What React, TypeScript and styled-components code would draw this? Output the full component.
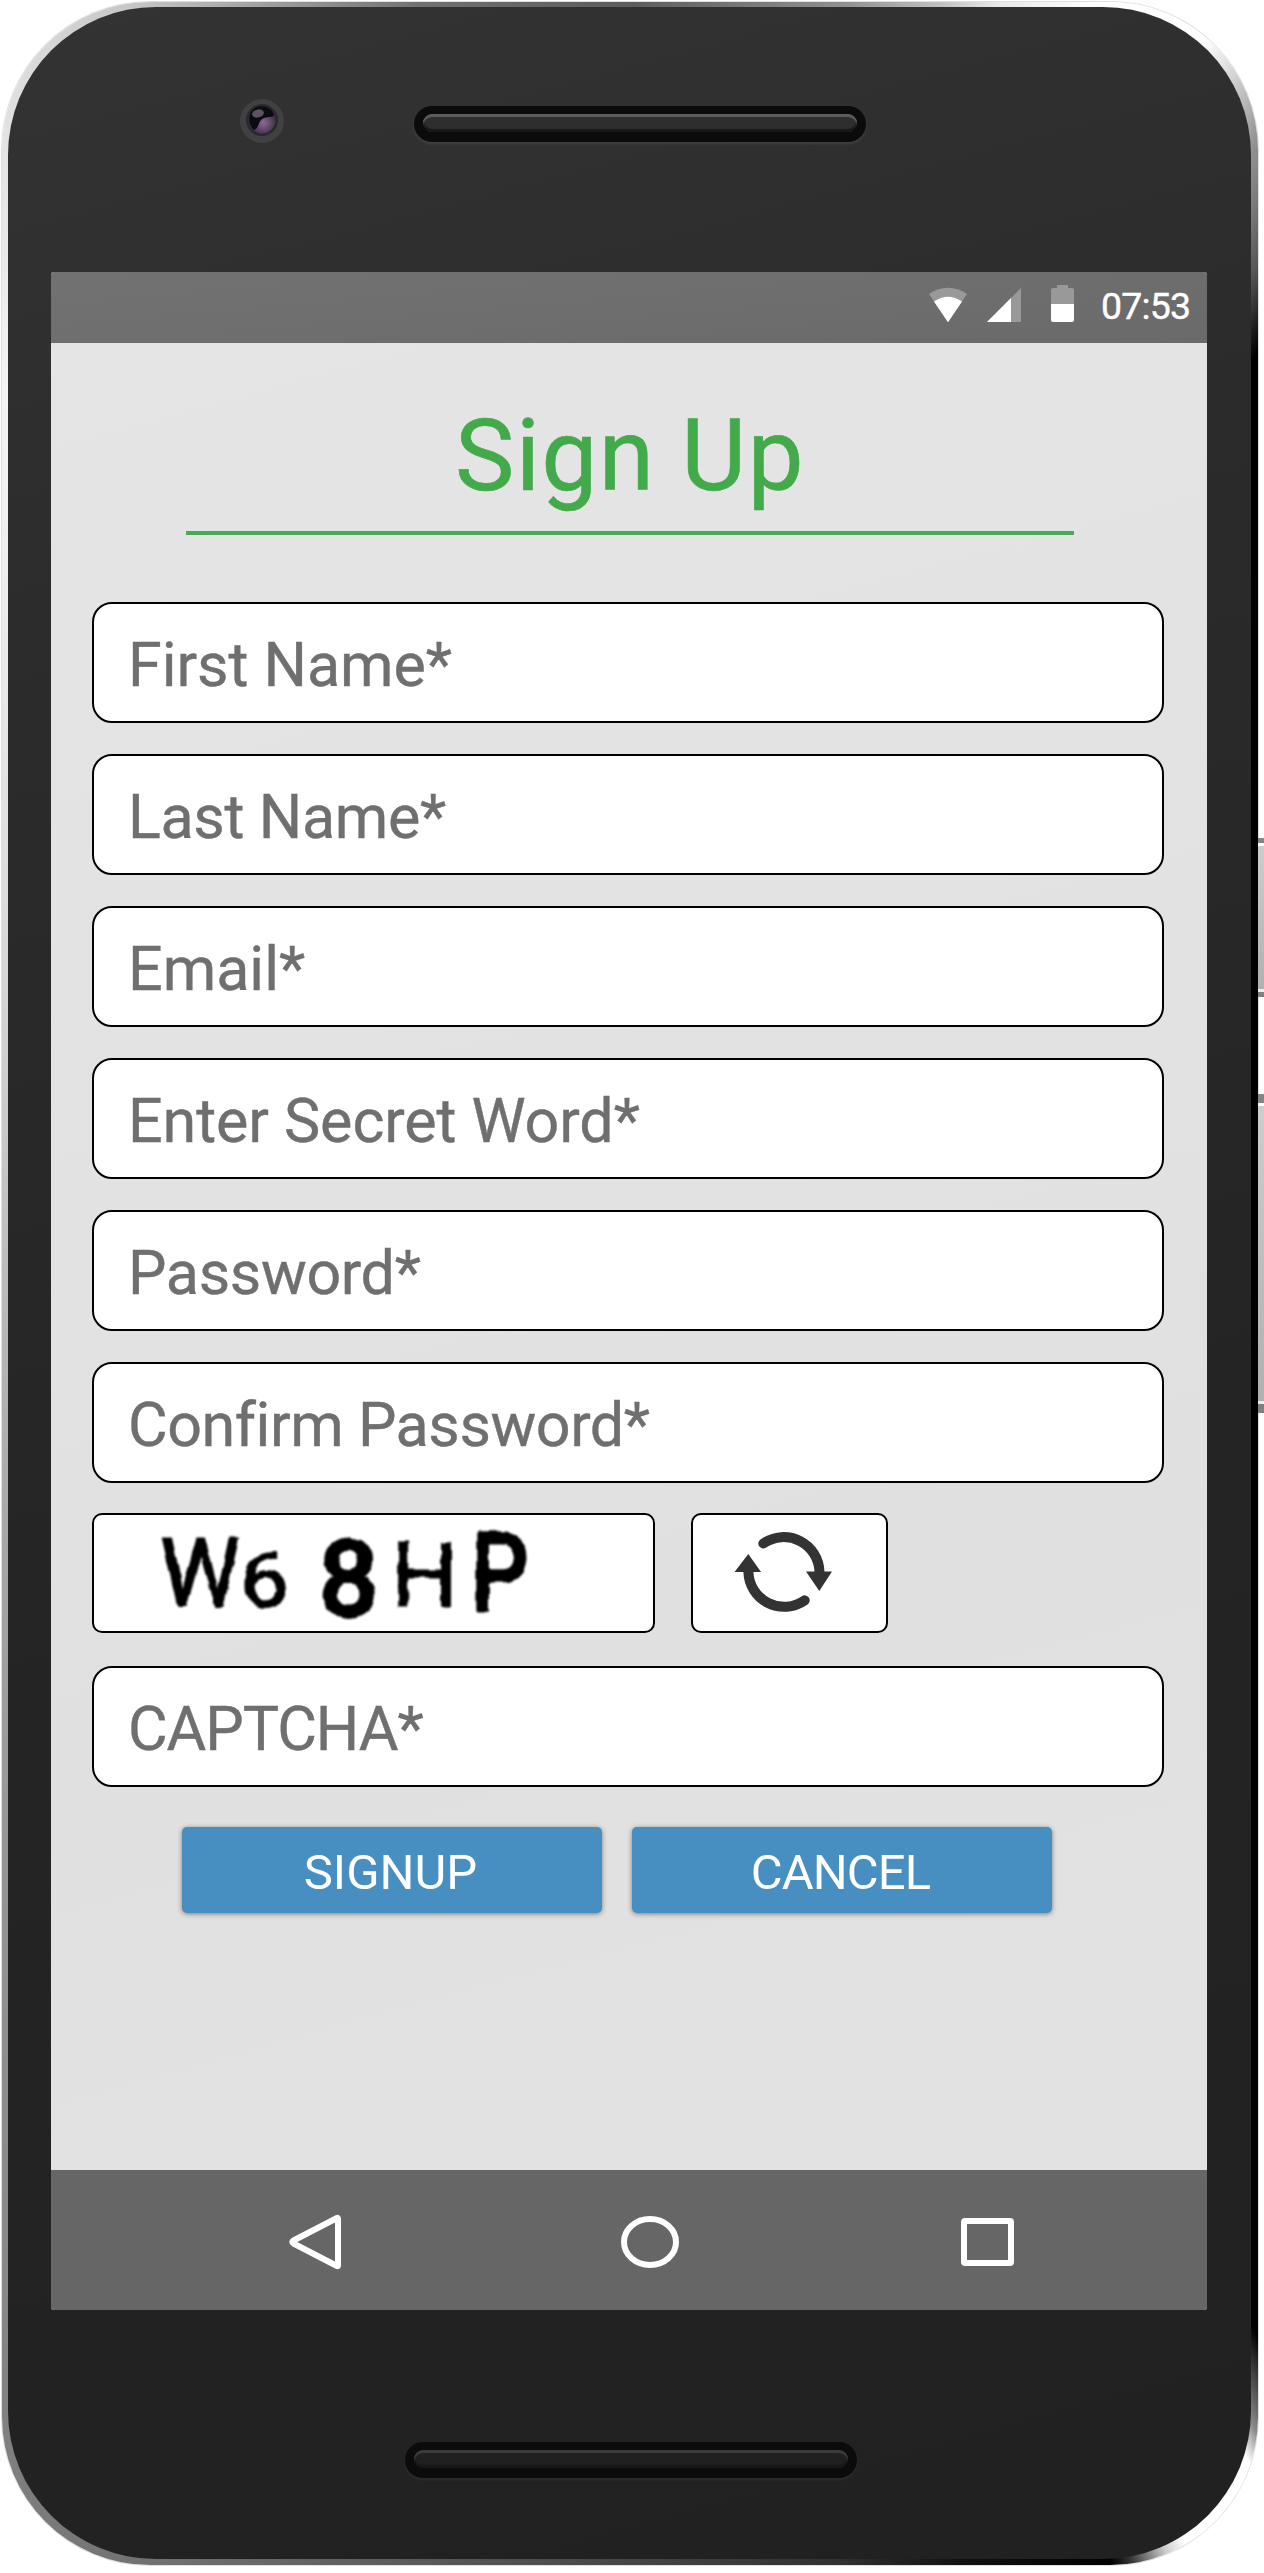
import React, { useState } from "react";
import styled, { createGlobalStyle } from "styled-components";

const GlobalStyle = createGlobalStyle`
  *, *::before, *::after { box-sizing: border-box; }
  html, body { margin: 0; padding: 0; background: #fff; }
  body { font-family: Roboto, "Liberation Sans", sans-serif; overflow: hidden; }
`;

const Stage = styled.main`
  position: relative;
  width: 1264px;
  height: 2573px;
  padding: 2px 0 0 2px;
  overflow: hidden;
`;

const Rim = styled.div`
  width: 1256px;
  height: 2563px;
  padding: 5px 7px 6px 6px;
  border-radius: 148px;
  box-shadow: 0 0 0 1px rgba(0, 0, 0, 0.12);
  background: conic-gradient(
    from 0deg at 628px 1281px,
    #5c5c5c 0deg, #909090 9.5deg, #c0c0c0 13.6deg, #e8e8e8 16deg, #fff 20deg, #fff 24.8deg,
    #ddd 26.2deg, #b0b0b0 27.8deg, #909090 28.8deg, #7c7c7c 30deg, #555 31.7deg, #111 33.5deg,
    #000 34deg, #000 149.2deg, #444 150.3deg, #888 151.4deg, #fff 152.3deg, #fff 156.2deg,
    #ccc 157.1deg, #333 158.6deg, #000 159.4deg, #111 165.5deg, #303030 170.5deg,
    #5a5a5a 189.3deg, #727272 201deg, #828282 209.2deg, #888 212deg, #bbb 270deg,
    #f4f4f4 325deg, #e4e4e4 331.1deg, #d8d8d8 334.6deg, #c4c4c4 339deg, #707070 350.7deg,
    #5c5c5c 360deg
  );
`;

const Body = styled.div`
  display: flex;
  flex-direction: column;
  height: 100%;
  border-radius: 148px;
  background: linear-gradient(165deg, #333 0%, #2b2b2b 25%, #242424 60%, #212121 100%);
  overflow: hidden;
`;

const Forehead = styled.header`
  display: flex;
  align-items: flex-start;
  height: 265px;
  padding: 91px 0 0 232px;
`;

const Camera = styled.svg`
  display: block;
  width: 44px;
  height: 46px;
`;

const Chin = styled.footer`
  display: flex;
  align-items: flex-start;
  padding: 132px 0 0 397px;
`;

const Grille = styled.div<{ $dim?: boolean }>`
  width: 452px;
  height: 36px;
  padding: 8px 9px 10px;
  border-radius: 18px;
  background: #0b0b0b;
  box-shadow: 0 2px 3px ${(p) => (p.$dim ? "rgba(255,255,255,.06)" : "rgba(255,255,255,.09)")};
`;

const TopGrille = styled(Grille)`
  margin: 8px 0 0 130px;
`;

const GrilleBar = styled.div<{ $dim?: boolean }>`
  height: 18px;
  border-radius: 9px;
  background: ${(p) => (p.$dim ? "#202020" : "#2e2e2e")};
  box-shadow: inset 0 3px 1px ${(p) => (p.$dim ? "#3c3c3c" : "#5f5c5f")}, inset 0 -3px 1px #181818;
`;

const Screen = styled.section`
  display: flex;
  flex-direction: column;
  width: 1156px;
  height: 2038px;
  margin-left: 43px;
  border-radius: 3px;
  overflow: hidden;
  background: linear-gradient(165deg, #e5e5e5 0%, #e2e2e2 45%, #e0e0e0 66%, #e2e2e2 82%, #e2e2e2 100%);
`;

const StatusBar = styled.div`
  display: flex;
  justify-content: flex-end;
  align-items: flex-start;
  height: 71px;
  padding-right: 15px;
  background: linear-gradient(175deg, #727272, #6a6a6a);
`;

const StatusIcons = styled.svg`
  display: block;
  width: 150px;
  height: 71px;
`;

const Clock = styled.time`
  margin-left: 23px;
  width: 91px;
  color: #fff;
  font-size: 37.5px;
  line-height: 69px;
  letter-spacing: -0.8px;
  white-space: nowrap;
  -webkit-text-stroke: 0.4px #fff;
`;

const Form = styled.form`
  display: flex;
  flex-direction: column;
  flex: 1;
  padding: 0 43px 0 41px;
`;

const Title = styled.h1`
  width: 888px;
  height: 192px;
  margin: 0 0 67px 94px;
  padding: 54px 0 0;
  border-bottom: 4px solid #48ac55;
  color: #43aa4b;
  font-size: 100px;
  font-weight: 400;
  line-height: 118px;
  letter-spacing: 1.3px;
  text-align: center;
  -webkit-text-stroke: 0.6px #43aa4b;
`;

const FieldStack = styled.div`
  display: grid;
  gap: 31px;
`;

const Field = styled.input<{ $tracking: number }>`
  display: block;
  width: 100%;
  height: 121px;
  padding: 4px 34px 0;
  border: 2px solid #000;
  border-radius: 20px;
  background: #fff;
  color: #333;
  font: 400 61px Roboto, "Liberation Sans", sans-serif;
  letter-spacing: ${(p) => p.$tracking}px;
  outline: none;
  &::placeholder { color: #6f6f6f; opacity: 1; -webkit-text-stroke: 0.4px #6f6f6f; }
`;

const CaptchaRow = styled.div`
  display: flex;
  gap: 36px;
  height: 120px;
  margin: -1px 0 2px;
`;

const CaptchaBox = styled.div`
  width: 563px;
  border: 2px solid #000;
  border-radius: 10px;
  background: #fff;
`;

const RefreshButton = styled.button`
  width: 197px;
  padding: 0;
  border: 2px solid #000;
  border-radius: 10px;
  background: #fff;
`;

const Drawing = styled.svg`
  display: block;
  width: 100%;
  height: 116px;
  overflow: visible;
`;

const Actions = styled.div`
  display: flex;
  gap: 30px;
  margin: 40px 0 0 90px;
`;

const ActionButton = styled.button<{ $tracking?: number }>`
  width: 420px;
  height: 86px;
  padding: 4px 3px 0 0;
  border: 0;
  border-radius: 5px;
  background: #468fc0;
  box-shadow: 0 1px 5px rgba(0, 0, 0, 0.45);
  color: #fff;
  font: 400 49px Roboto, "Liberation Sans", sans-serif;
  letter-spacing: ${(p) => p.$tracking ?? 0}px;
`;

const NavBar = styled.nav`
  display: flex;
  align-items: center;
  height: 140px;
  padding-left: 236px;
  background: #666;
`;

const NavIcon = styled.svg<{ $gap?: number }>`
  display: block;
  width: 60px;
  height: 60px;
  margin-left: ${(p) => p.$gap ?? 0}px;
  fill: none;
  stroke: #fff;
  stroke-width: 6;
  stroke-linejoin: round;
`;

const SideKey = styled.div<{ $top: number; $height: number; $cap: number }>`
  position: absolute;
  left: 1258px;
  top: ${(p) => p.$top}px;
  width: 6px;
  height: ${(p) => p.$height}px;
  border-top: ${(p) => p.$cap}px solid #858585;
  border-bottom: ${(p) => p.$cap}px solid #808080;
  background: linear-gradient(#cecece, #b0b0b0);
  box-shadow: inset 0 3px 0 #fff, inset 0 -3px 0 #eee;
`;

const fields = [
  { name: "First Name*", tracking: -0.05 },
  { name: "Last Name*", tracking: -0.35 },
  { name: "Email*", tracking: 0 },
  { name: "Enter Secret Word*", tracking: -0.08 },
  { name: "Password*", tracking: -0.35 },
  { name: "Confirm Password*", tracking: -0.45 },
];

interface Glyph {
  char: string;
  x: number;
  baseline: number;
  size: number;
  stretch: number;
  stroke: number;
}

const glyphs: Glyph[] = [
  { char: "W", x: 66, baseline: 91, size: 95, stretch: 0.95, stroke: 2 },
  { char: "6", x: 146, baseline: 91, size: 75, stretch: 1.16, stroke: 2 },
  { char: "8", x: 226, baseline: 98.5, size: 102, stretch: 1.0, stroke: 6 },
  { char: "H", x: 297, baseline: 92, size: 90, stretch: 1.05, stroke: 1 },
  { char: "P", x: 377, baseline: 95, size: 107, stretch: 0.84, stroke: 5 },
];

function CaptchaImage() {
  return (
    <Drawing viewBox="0 0 559 116" fill="#000" stroke="#000" strokeLinejoin="round">
      <defs>
        <filter id="wobble" x="-5%" y="-5%" width="110%" height="110%">
          <feTurbulence type="fractalNoise" baseFrequency="0.09" numOctaves="1" seed="4" />
          <feDisplacementMap in="SourceGraphic" scale="5" xChannelSelector="R" yChannelSelector="G" />
          <feGaussianBlur stdDeviation="0.8" />
        </filter>
      </defs>
      <g filter="url(#wobble)" fontFamily="Roboto, sans-serif">
        {glyphs.map((g) => (
          <text
            key={g.char}
            transform={`translate(${g.x} ${g.baseline}) scale(${g.stretch} 1)`}
            fontSize={g.size}
            strokeWidth={g.stroke}
          >
            {g.char}
          </text>
        ))}
      </g>
    </Drawing>
  );
}

function RefreshIcon() {
  return (
    <Drawing viewBox="693 1515 193 116" fill="none" stroke="#333" strokeWidth="10" strokeLinecap="round">
      <path d="M763.3 1543.5A35.8 35.8 0 0 1 819.5 1572" />
      <path d="M804.7 1600.3A35.8 35.8 0 0 1 748.4 1572" />
      <path d="M806 1571.5H832L819.3 1591ZM734.5 1572H761L748.3 1554Z" fill="#333" stroke="none" />
    </Drawing>
  );
}

export default function App() {
  const [values, setValues] = useState<Record<string, string>>({});
  const bind = (name: string) => ({
    placeholder: name,
    value: values[name] ?? "",
    onChange: (e: React.ChangeEvent<HTMLInputElement>) => setValues({ ...values, [name]: e.target.value }),
  });

  return (
    <>
      <GlobalStyle />
      <Stage>
        <Rim>
          <Body>
            <Forehead>
              <Camera viewBox="0 0 44 46">
                <defs>
                  <radialGradient id="lens" cx="0.55" cy="0.6" r="0.5">
                    <stop offset="0" stopColor="#8a6a94" />
                    <stop offset="0.5" stopColor="#67486f" />
                    <stop offset="1" stopColor="#33303c" />
                  </radialGradient>
                </defs>
                <circle cx="22" cy="23" r="22" fill="#414141" />
                <circle cx="22" cy="22" r="16" fill="#282832" />
                <circle cx="22" cy="22" r="13.5" fill="url(#lens)" />
                <path d="M14 32C7 26 8 14 15 10C22 6 33 9 34 18C30 20 25 18 21 22C18 25 19 30 14 32Z" fill="#0c0b10" />
                <ellipse cx="18" cy="15.5" rx="6" ry="4" fill="#5d5362" transform="rotate(-15 18 15.5)" />
              </Camera>
              <TopGrille>
                <GrilleBar />
              </TopGrille>
            </Forehead>

            <Screen>
              <StatusBar>
                <StatusIcons viewBox="928 272 150 71">
                  <path d="M929 294Q948 281.500 967 294L948 322.300Z" fill="#999" />
                  <path d="M934 301.500Q948 292 962 301.500L948 322.300Z" fill="#fff" />
                  <path d="M987 322L1021 288V322Z" fill="#999" />
                  <path d="M987 322L1011 298V322Z" fill="#fff" />
                  <path d="M1057 285H1068V288H1072Q1074 288 1074 290V304H1051V290Q1051 288 1053 288H1057Z" fill="#999" />
                  <path d="M1051 304H1074V320Q1074 322 1072 322H1053Q1051 322 1051 320Z" fill="#fff" />
                </StatusIcons>
                <Clock>07:53</Clock>
              </StatusBar>

              <Form onSubmit={(e) => e.preventDefault()}>
                <Title>Sign Up</Title>
                <FieldStack>
                  {fields.map((f) => (
                    <Field key={f.name} $tracking={f.tracking} {...bind(f.name)} />
                  ))}
                  <CaptchaRow>
                    <CaptchaBox>
                      <CaptchaImage />
                    </CaptchaBox>
                    <RefreshButton type="button" aria-label="Refresh">
                      <RefreshIcon />
                    </RefreshButton>
                  </CaptchaRow>
                  <Field $tracking={-1.1} {...bind("CAPTCHA*")} />
                </FieldStack>
                <Actions>
                  <ActionButton type="submit">SIGNUP</ActionButton>
                  <ActionButton type="button" $tracking={-0.9}>CANCEL</ActionButton>
                </Actions>
              </Form>

              <NavBar>
                <NavIcon viewBox="0 0 60 60">
                  <path d="M51 9V55.500Q51 56.500 50 56L6.500 33.500Q4 32 6.500 30.500L50 8Q51 7.500 51 9Z" />
                </NavIcon>
                <NavIcon $gap={273} viewBox="0 0 60 60">
                  <ellipse cx="30" cy="32" rx="26" ry="23" />
                </NavIcon>
                <NavIcon $gap={277} viewBox="0 0 60 60">
                  <rect x="7" y="11" width="47" height="42" rx="1" />
                </NavIcon>
              </NavBar>
            </Screen>

            <Chin>
              <Grille $dim>
                <GrilleBar $dim />
              </Grille>
            </Chin>
          </Body>
        </Rim>
        <SideKey $top={838} $height={159} $cap={5} />
        <SideKey $top={1094} $height={319} $cap={9} />
      </Stage>
    </>
  );
}
